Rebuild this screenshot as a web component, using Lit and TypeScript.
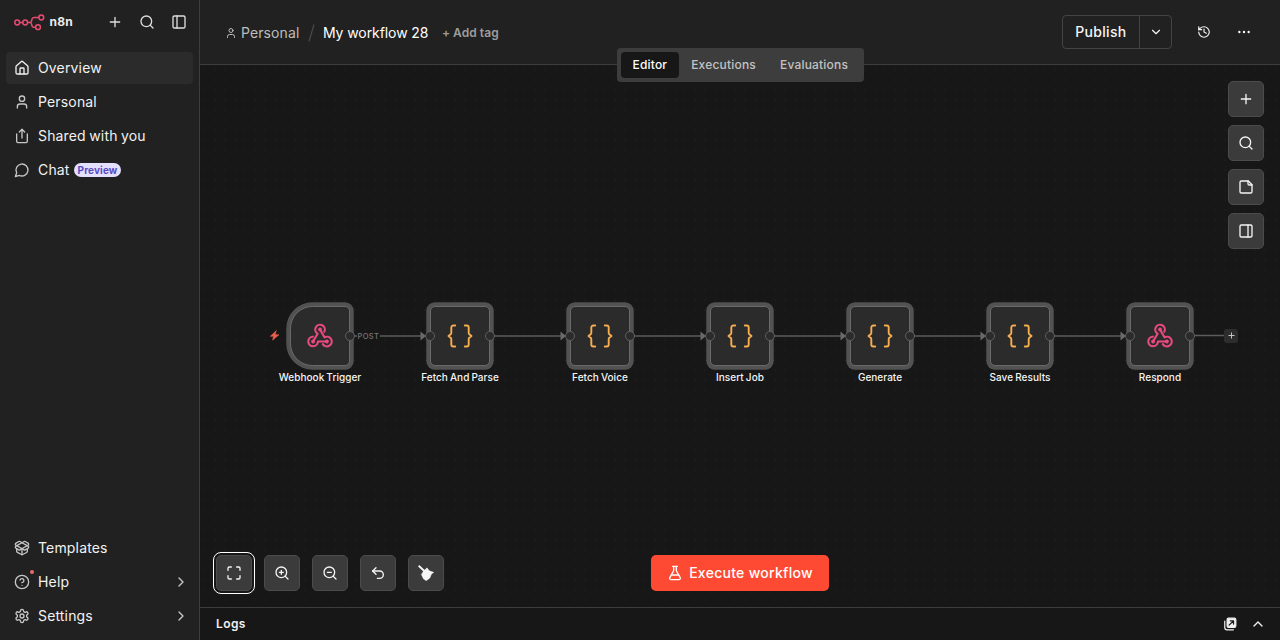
import { LitElement, html, css, svg } from "lit";
import { customElement, property } from "lit/decorators.js";
import { classMap } from "lit/directives/class-map.js";
import { styleMap } from "lit/directives/style-map.js";

const ICONS: Record<string, unknown> = {
  plus: svg`<path d="M5 12h14M12 5v14"/>`,
  search: svg`<circle cx="11" cy="11" r="8"/><path d="m21 21-4.3-4.3"/>`,
  panelLeft: svg`<rect width="18" height="18" x="3" y="3" rx="2"/><path d="M9 3v18"/>`,
  panelRight: svg`<rect width="18" height="18" x="3" y="3" rx="2"/><path d="M15 3v18"/>`,
  house: svg`<path d="M15 21v-8a1 1 0 0 0-1-1h-4a1 1 0 0 0-1 1v8"/><path d="M3 10a2 2 0 0 1 .709-1.528l7-5.999a2 2 0 0 1 2.582 0l7 5.999A2 2 0 0 1 21 10v9a2 2 0 0 1-2 2H5a2 2 0 0 1-2-2z"/>`,
  user: svg`<path d="M19 21v-2a4 4 0 0 0-4-4H9a4 4 0 0 0-4 4v2"/><circle cx="12" cy="7" r="4"/>`,
  share: svg`<path d="M12 2v13"/><path d="m16 6-4-4-4 4"/><path d="M4 9v11a2 2 0 0 0 2 2h12a2 2 0 0 0 2-2V9"/>`,
  chat: svg`<path d="M7.9 20A9 9 0 1 0 4 16.1L2 22Z"/>`,
  box: svg`<path d="M12 22v-9"/><path d="M15.17 2.21a1.67 1.67 0 0 1 1.63 0L21 4.57a1.93 1.93 0 0 1 0 3.36L8.82 14.79a1.655 1.655 0 0 1-1.64 0L3 12.43a1.93 1.93 0 0 1 0-3.36z"/><path d="M20 13v3.87a2.06 2.06 0 0 1-1.11 1.83l-6 3.08a1.93 1.93 0 0 1-1.78 0l-6-3.08A2.06 2.06 0 0 1 4 16.87V13"/><path d="M21 12.43a1.93 1.93 0 0 0 0-3.36L8.83 2.2a1.64 1.64 0 0 0-1.63 0L3 4.57a1.93 1.93 0 0 0 0 3.36l12.18 6.86a1.636 1.636 0 0 0 1.63 0z"/>`,
  help: svg`<circle cx="12" cy="12" r="10"/><path d="M9.09 9a3 3 0 0 1 5.83 1c0 2-3 3-3 3"/><path d="M12 17h.01"/>`,
  settings: svg`<path d="M12.22 2h-.44a2 2 0 0 0-2 2v.18a2 2 0 0 1-1 1.73l-.43.25a2 2 0 0 1-2 0l-.15-.08a2 2 0 0 0-2.73.73l-.22.38a2 2 0 0 0 .73 2.73l.15.1a2 2 0 0 1 1 1.72v.51a2 2 0 0 1-1 1.74l-.15.09a2 2 0 0 0-.73 2.73l.22.38a2 2 0 0 0 2.73.73l.15-.08a2 2 0 0 1 2 0l.43.25a2 2 0 0 1 1 1.73V20a2 2 0 0 0 2 2h.44a2 2 0 0 0 2-2v-.18a2 2 0 0 1 1-1.73l.43-.25a2 2 0 0 1 2 0l.15.08a2 2 0 0 0 2.73-.73l.22-.39a2 2 0 0 0-.73-2.73l-.15-.08a2 2 0 0 1-1-1.74v-.5a2 2 0 0 1 1-1.74l.15-.09a2 2 0 0 0 .73-2.73l-.22-.38a2 2 0 0 0-2.73-.73l-.15.08a2 2 0 0 1-2 0l-.43-.25a2 2 0 0 1-1-1.73V4a2 2 0 0 0-2-2z"/><circle cx="12" cy="12" r="3"/>`,
  right: svg`<path d="m9 18 6-6-6-6"/>`,
  down: svg`<path d="m6 9 6 6 6-6"/>`,
  up: svg`<path d="m18 15-6-6-6 6"/>`,
  history: svg`<path d="M3 12a9 9 0 1 0 9-9 9.75 9.75 0 0 0-6.74 2.74L3 8"/><path d="M3 3v5h5"/><path d="M12 7v5l4 2"/>`,
  more: svg`<circle cx="12" cy="12" r="1"/><circle cx="20" cy="12" r="1"/><circle cx="4" cy="12" r="1"/>`,
  note: svg`<path d="M15.5 3H5a2 2 0 0 0-2 2v14a2 2 0 0 0 2 2h14a2 2 0 0 0 2-2V8.500Z"/><path d="M15 3v4a2 2 0 0 0 2 2h4"/>`,
  fit: svg`<path d="M8 3H5a2 2 0 0 0-2 2v3M21 8V5a2 2 0 0 0-2-2h-3M3 16v3a2 2 0 0 0 2 2h3M16 21h3a2 2 0 0 0 2-2v-3"/>`,
  zoomIn: svg`<circle cx="11" cy="11" r="8"/><path d="m21 21-4.350-4.350M11 8v6M8 11h6"/>`,
  zoomOut: svg`<circle cx="11" cy="11" r="8"/><path d="m21 21-4.350-4.350M8 11h6"/>`,
  undo: svg`<path d="M9 14 4 9l5-5"/><path d="M4 9h10.500a5.500 5.500 0 0 1 0 11H11"/>`,
  broom: svg`<path stroke-width="2.800" stroke-linecap="butt" d="M1 1.200 9.500 9"/><path fill="currentColor" stroke-width=".6" d="M8 9.500 13.500 4.300 17 8.800l6.600 2.200-3.500 3-2.300 5.500-5.300 4.200L8.300 21 5.200 14.500z"/>`,
  flask: svg`<path d="M14 2v6a2 2 0 0 0 .245.960l5.510 10.080A2 2 0 0 1 18 22H6a2 2 0 0 1-1.755-2.960l5.510-10.080A2 2 0 0 0 10 8V2"/><path d="M6.453 15h11.094"/><path d="M8.500 2h7"/>`,
  popout: svg`<rect x="7" y="2" width="15" height="16" rx="2.500" fill="currentColor"/><path d="M3 7v11a4 4 0 0 0 4 4h11"/><path d="m10.500 14 7-7M12.500 6.500H18V12" stroke="#171717" stroke-width="2.200"/>`,
  bolt: svg`<path fill="currentColor" stroke-width="1.400" d="M15.500 2 3 13.500h7L8 22 21.500 10.500h-8z"/>`,
};

@customElement("ui-icon")
class UiIcon extends LitElement {
  static styles = css`
    :host { display: inline-flex; flex: none; }
    svg { display: block; fill: none; stroke: currentColor; stroke-linecap: round; stroke-linejoin: round; }
  `;
  @property() name = "";
  @property({ type: Number }) size = 16;
  @property({ type: Number }) weight = 2;
  render() {
    return html`<svg width=${this.size} height=${this.size} viewBox="0 0 24 24" stroke-width=${this.weight}>${ICONS[this.name]}</svg>`;
  }
}

@customElement("side-bar")
class SideBar extends LitElement {
  static styles = css`
    :host { display: flex; flex-direction: column; box-sizing: border-box; width: 200px; height: 640px; background: #212121; border-right: 1px solid #3d3d3d; color: #f2f2f2; font: 400 14px/20px Inter, sans-serif; letter-spacing: 0.16px; word-spacing: -0.7px; }
    .top { display: flex; align-items: center; height: 44px; padding: 0 12px 0 14px; color: #dedede; }
    .brand { font-weight: 700; font-size: 12px; letter-spacing: 0.2px; margin-left: 4.500px; flex: 1; color: #ececec; }
    .actions { display: flex; gap: 16px; }
    nav { display: flex; flex-direction: column; gap: 2px; padding: 8px 6px 0; }
    nav.end { margin-top: auto; padding-bottom: 8px; }
    .item { display: flex; align-items: center; height: 32px; padding: 0 4px 0 8px; border-radius: 4px; gap: 8px; }
    .item.on { background: #2b2b2b; }
    .item ui-icon { color: #c6c6c6; }
    .item.on ui-icon { color: #f0f0f0; }
    .glyph { position: relative; display: flex; }
    .dot { position: absolute; right: -4px; top: -4px; width: 4px; height: 4px; border-radius: 50%; background: #ee6a6a; }
    .label { flex: 1; }
    .chat .label { flex: none; }
    .pill { margin-left: -4px; height: 14px; line-height: 14px; padding: 0 4px; border-radius: 8px; background: #e4e0fb; color: #5b4bc0; font-size: 10px; font-weight: 700; letter-spacing: 0.1px; }
  `;
  row(icon: string, label: string, o: { on?: boolean; dot?: boolean; more?: boolean; pill?: string } = {}) {
    return html`<div class=${classMap({ item: true, on: !!o.on, chat: !!o.pill })}>
      <span class="glyph"><ui-icon name=${icon}></ui-icon>${o.dot ? html`<i class="dot"></i>` : ""}</span>
      <span class="label">${label}</span>
      ${o.pill ? html`<span class="pill">${o.pill}</span>` : ""}
      ${o.more ? html`<ui-icon name="right"></ui-icon>` : ""}
    </div>`;
  }
  render() {
    return html`
      <div class="top">
        <svg width="31" height="17" viewBox="0 0 31 17" fill="none" stroke="#ea4b71" stroke-width="1.5">
          <circle cx="3.200" cy="8.500" r="2.400"/><circle cx="11.200" cy="8.500" r="2.400"/>
          <circle cx="27.300" cy="3.500" r="2.400"/><circle cx="24" cy="13.200" r="2.400"/>
          <path d="M5.600 8.500h3.200M13.600 8.500h1.900c1.400 0 2-.6 2.200-1.900l.2-1.100c.2-1.400.9-2 2.200-2h4.800M15.500 8.500c1.400 0 2 .7 2.200 1.900l.1.900c.2 1.300.9 1.900 2.200 1.900h1.600"/>
        </svg>
        <span class="brand">n8n</span>
        <span class="actions"><ui-icon name="plus"></ui-icon><ui-icon name="search"></ui-icon><ui-icon name="panelLeft"></ui-icon></span>
      </div>
      <nav>
        ${this.row("house", "Overview", { on: true })}
        ${this.row("user", "Personal")}
        ${this.row("share", "Shared with you")}
        ${this.row("chat", "Chat", { pill: "Preview" })}
      </nav>
      <nav class="end">
        ${this.row("box", "Templates")}
        ${this.row("help", "Help", { dot: true, more: true })}
        ${this.row("settings", "Settings", { more: true })}
      </nav>`;
  }
}

@customElement("top-bar")
class TopBar extends LitElement {
  static styles = css`
    :host { position: relative; z-index: 2; display: flex; align-items: center; box-sizing: border-box; height: 65px; padding: 0 29px 0 25px; background: #212121; border-bottom: 1px solid #3d3d3d; color: #f5f5f5; font: 400 14px/20px Inter, sans-serif; letter-spacing: 0.32px; }
    .crumbs { display: flex; align-items: center; flex: 1; padding-top: 2px; }
    .owner { display: flex; align-items: center; gap: 4px; color: #bdbdbd; letter-spacing: 0.1px; }
    .slash { display: block; margin: 0 7.500px 0 9px; }
    .name { color: #fff; letter-spacing: -0.08px; }
    .tag { margin-left: 13.500px; color: #9d9d9d; font-size: 12px; font-weight: 600; letter-spacing: 0.05px; }
    .publish { display: flex; box-sizing: border-box; height: 34px; border: 1px solid #444; border-radius: 4px; font-weight: 500; }
    .main { display: flex; align-items: center; padding: 0 12.500px; border-right: 1px solid #444; font-size: 14px; }
    .drop { display: flex; align-items: center; padding: 0 8px 0 9px; }
    .history { margin: 0 26px 0 25px; }
    .tabs { position: absolute; left: 416.500px; top: 48px; display: flex; box-sizing: border-box; width: 247px; height: 34px; padding: 4px; background: #3d3d3d; border-radius: 4px; font-size: 12px; font-weight: 500; line-height: 26px; color: #c2c2c2; letter-spacing: 0.19px; }
    .tab { padding: 0 12px; border-radius: 4px; }
    .tab.on { background: #171717; color: #fff; }
  `;
  render() {
    return html`
      <div class="crumbs">
        <span class="owner"><ui-icon name="user" size="12"></ui-icon>Personal</span>
        <svg class="slash" width="7" height="18" viewBox="0 0 7 18" stroke="#4a4a4a" stroke-width="1.200"><path d="M6 0.500 1 17.500"/></svg>
        <span class="name">My workflow 28</span>
        <span class="tag">+ Add tag</span>
      </div>
      <div class="publish"><span class="main">Publish</span><span class="drop"><ui-icon name="down" size="14"></ui-icon></span></div>
      <ui-icon class="history" name="history" size="14"></ui-icon>
      <ui-icon name="more" size="14" weight="2.100"></ui-icon>
      <div class="tabs"><span class="tab on">Editor</span><span class="tab">Executions</span><span class="tab">Evaluations</span></div>`;
  }
}

interface FlowNode { x: number; label: string; kind: "hook" | "code"; trigger?: boolean }
const NODES: FlowNode[] = [
  { x: 90, label: "Webhook Trigger", kind: "hook", trigger: true },
  { x: 230, label: "Fetch And Parse", kind: "code" },
  { x: 370, label: "Fetch Voice", kind: "code" },
  { x: 510, label: "Insert Job", kind: "code" },
  { x: 650, label: "Generate", kind: "code" },
  { x: 790, label: "Save Results", kind: "code" },
  { x: 930, label: "Respond", kind: "hook" },
];

@customElement("flow-canvas")
class FlowCanvas extends LitElement {
  static styles = css`
    :host { position: relative; display: flex; flex: 1; min-height: 0; background: #171717 radial-gradient(circle, #1f1f1f 0.6px, transparent 0.9px) 0 0 / 10px 10px; color: #f5f5f5; font: 500 14px/20px Inter, sans-serif; }
    .wires { position: absolute; left: 0; top: 0; }
    .node { position: absolute; top: 241px; box-sizing: border-box; width: 60px; height: 60px; border: 1.250px solid #6a6a6a; border-radius: 5px; background: #2b2b2b; box-shadow: 0 0 0 3.750px #525252; display: flex; align-items: center; justify-content: center; }
    .node.trigger { border-radius: 22.500px 5px 5px 22.500px; }
    .port { position: absolute; top: 24px; width: 8px; height: 8px; border: 1px solid #606060; border-radius: 50%; background: #2b2b2b; }
    .in { left: -6px; }
    .out { right: -6px; }
    .label { position: absolute; top: 62px; left: -40px; width: 138px; text-align: center; font-size: 10px; line-height: 16px; letter-spacing: 0.04px; word-spacing: -0.6px; white-space: nowrap; }
    .hook { color: #ea4b7f; display: flex; padding-bottom: 1px; }
    .bolt { position: absolute; left: 69px; top: 265px; color: #ee5f4d; display: flex; }
    .post { position: absolute; left: 156.500px; top: 266px; padding: 0 1px; background: #171717; color: #767676; font-size: 7.500px; line-height: 11px; font-weight: 500; letter-spacing: 0.4px; }
    .add { position: absolute; left: 1024px; top: 263.500px; width: 14px; height: 14px; border-radius: 3px; background: #2d2d2d; color: #cfcfcf; display: flex; align-items: center; justify-content: center; }
    .btn { box-sizing: border-box; width: 36px; height: 36px; border: 1px solid #4b4b4b; border-radius: 5px; background: #3b3b3b; display: flex; align-items: center; justify-content: center; }
    .btn.focus { outline: 1.500px solid #fff; outline-offset: 2px; }
    .tools { position: absolute; right: 16px; top: 16px; display: flex; flex-direction: column; gap: 8px; }
    .zoom { position: absolute; left: 16px; bottom: 16px; display: flex; gap: 12px; }
    .run { position: absolute; left: 451px; bottom: 16px; width: 178px; height: 36px; border-radius: 5px; background: #ff4a33; color: #fff; display: flex; align-items: center; justify-content: center; gap: 6px; letter-spacing: 0.28px; }
  `;
  node(n: FlowNode) {
    const arm = () => svg`<path d="M17.300 8.700A4.800 4.800 0 1 0 10.600 10.650L6.600 17.600"/><circle cx="13" cy="6.500" r="1.900" fill="currentColor" stroke="none"/>`;
    return html`<div class=${classMap({ node: true, trigger: !!n.trigger })} style=${styleMap({ left: n.x + "px" })}>
      ${n.kind === "hook"
        ? html`<span class="hook"><svg width="26" height="25" viewBox="0 0 26 25" fill="none" stroke="currentColor" stroke-width="2.100" stroke-linecap="round" stroke-linejoin="round">
            ${[0, 120, 240].map((a) => svg`<g transform="rotate(${a} 13 14.500)">${arm()}</g>`)}
          </svg></span>`
        : html`<svg width="26" height="24" viewBox="0 0 26 24" fill="none" stroke="#f5ad4f" stroke-width="1.900" stroke-linecap="round" stroke-linejoin="round">
            <path d="M8.200 1.500H6.300a2 2 0 0 0-2 2v5.300a2 2 0 0 1-.6 1.400L1.500 12l2.200 1.800a2 2 0 0 1 .6 1.400v5.300a2 2 0 0 0 2 2h1.900M17.800 1.500h1.900a2 2 0 0 1 2 2v5.300a2 2 0 0 0 .6 1.400l2.200 1.800-2.200 1.800a2 2 0 0 0-.6 1.400v5.300a2 2 0 0 1-2 2h-1.900"/>
          </svg>`}
      ${n.trigger ? "" : html`<i class="port in"></i>`}<i class="port out"></i>
      <span class="label">${n.label}</span>
    </div>`;
  }
  render() {
    return html`
      <svg class="wires" width="1080" height="542">
        ${NODES.slice(0, -1).map((n) => svg`<path d="M${n.x + 60} 271H${n.x + 135}" stroke="#5c5c5c" stroke-width="1.300"/><path d="M${n.x + 130.500} 266.600v8.800l5.500-4.400z" fill="#6a6a6a"/>`)}
        <path d="M990 270.500h34" stroke="#5c5c5c" stroke-width="1.300"/>
      </svg>
      <span class="bolt"><ui-icon name="bolt" size="11"></ui-icon></span>
      ${NODES.map((n) => this.node(n))}
      <span class="post">POST</span>
      <span class="add"><ui-icon name="plus" size="9" weight="2.500"></ui-icon></span>
      <div class="tools">${["plus", "search", "note", "panelRight"].map((i) => html`<span class="btn"><ui-icon name=${i}></ui-icon></span>`)}</div>
      <div class="zoom">${["fit", "zoomIn", "zoomOut", "undo", "broom"].map((i, k) => html`<span class=${classMap({ btn: true, focus: k === 0 })}><ui-icon name=${i}></ui-icon></span>`)}</div>
      <div class="run"><ui-icon name="flask"></ui-icon>Execute workflow</div>`;
  }
}

@customElement("app-root")
class AppRoot extends LitElement {
  static styles = css`
    :host { display: flex; width: 1280px; height: 640px; overflow: hidden; background: #171717; }
    main { flex: 1; display: flex; flex-direction: column; min-width: 0; }
    footer { display: flex; align-items: center; gap: 13px; box-sizing: border-box; height: 33px; padding: 0 14px 0 16px; border-top: 1px solid #3d3d3d; background: #171717; color: #f0f0f0; font: 600 12px/20px Inter, sans-serif; letter-spacing: 0.4px; }
    .title { flex: 1; }
  `;
  render() {
    return html`<side-bar></side-bar>
      <main><top-bar></top-bar><flow-canvas></flow-canvas>
        <footer><span class="title">Logs</span><ui-icon name="popout" size="14"></ui-icon><ui-icon name="up"></ui-icon></footer>
      </main>`;
  }
}
